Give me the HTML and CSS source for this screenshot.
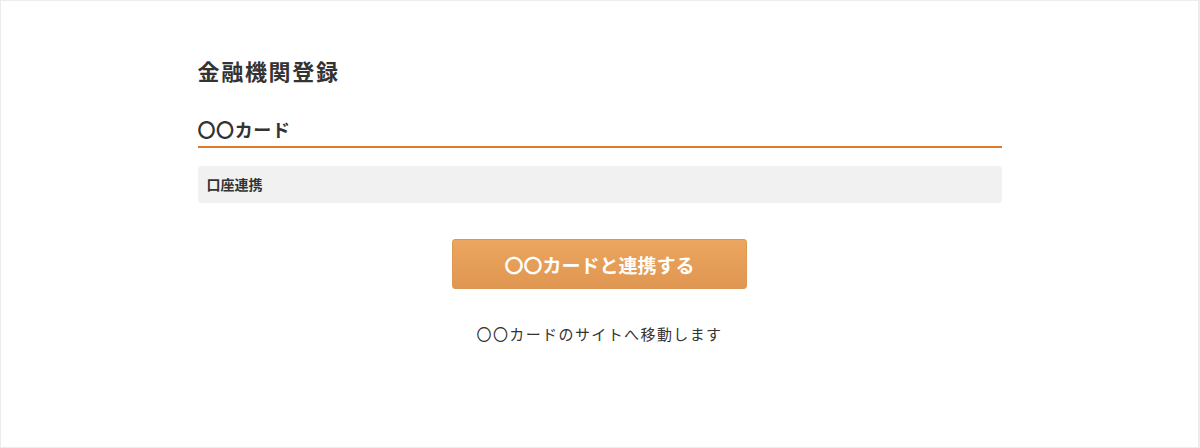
FILE: index.html
```html
<!DOCTYPE html>
<html lang="ja">
<head>
    <meta charset="UTF-8">
    <meta name="viewport" content="width=device-width, initial-scale=1.0">
    <title>金融機関登録</title>
    <link rel="stylesheet" href="styles.css">
</head>
<body>
    <div class="page">
        <main class="content">
            <h1 class="title">金融機関登録</h1>
            <h2 class="bank">〇〇カード</h2>
            <div class="section">口座連携</div>
            <div class="actions">
                <button class="btn">〇〇カードと連携する</button>
                <p class="note">〇〇カードのサイトへ移動します</p>
            </div>
        </main>
    </div>
</body>
</html>
```

FILE: styles.css
```css
html, body {
    margin: 0;
    padding: 0;
}
body {
    font-family: "Noto Sans CJK JP", "Noto Sans", sans-serif;
    color: #333;
    background-color: #fff;
}
.page {
    box-sizing: border-box;
    width: 1200px;
    height: 448px;
    border: 1px solid #ececec;
    border-right-width: 2px;
}
.content {
    width: 804px;
    margin: 0 auto;
    padding-top: 54px;
}
.title {
    margin: 0;
    font-size: 22px;
    line-height: 30px;
    font-weight: bold;
    letter-spacing: 1.7px;
}
.bank {
    margin: 31px 0 0;
    font-size: 18px;
    line-height: 26px;
    font-weight: bold;
    letter-spacing: 0.6px;
    padding-bottom: 4px;
    border-bottom: 2px solid #e07a2c;
}
.section {
    margin-top: 18px;
    height: 37px;
    line-height: 37px;
    padding: 0 9px;
    background-color: #f1f1f1;
    border-radius: 4px;
    font-size: 14px;
    font-weight: bold;
}
.actions {
    display: flex;
    flex-direction: column;
    align-items: center;
    margin-top: 36px;
}
.btn {
    width: 295px;
    height: 50px;
    border: 1px solid #dc9853;
    border-radius: 3px;
    background: linear-gradient(#eca660, #df9650);
    color: #fff;
    font-family: inherit;
    font-size: 19px;
    font-weight: bold;
}
.note {
    margin: 34px 0 0;
    font-size: 15px;
    line-height: 22px;
    letter-spacing: 1.4px;
}
```
